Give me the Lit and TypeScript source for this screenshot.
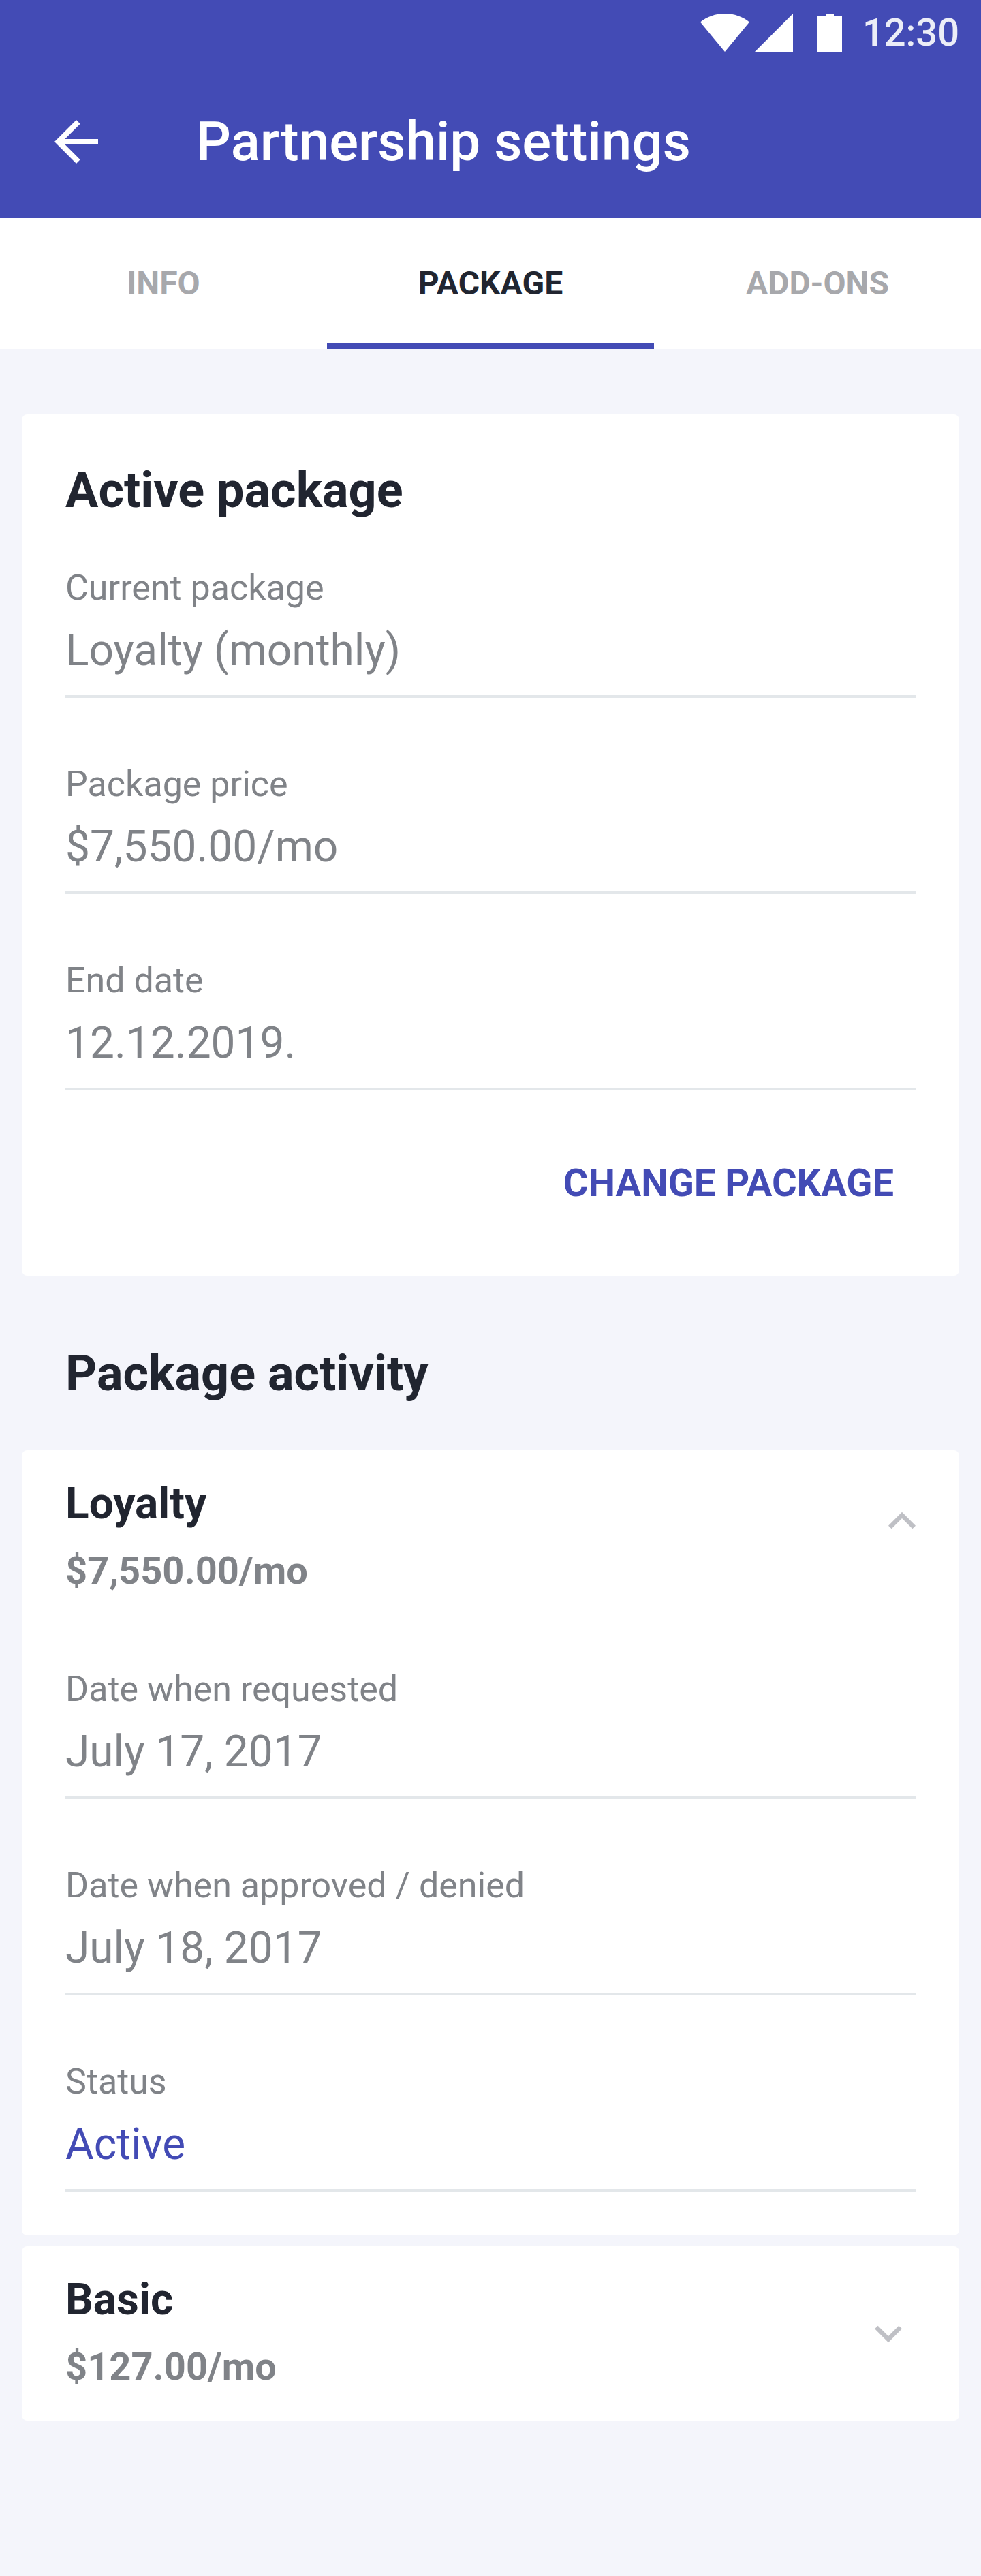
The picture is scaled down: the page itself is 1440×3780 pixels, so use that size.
import { LitElement, html, css, svg, nothing } from "lit";
import { customElement, property, state } from "lit/decorators.js";
import { classMap } from "lit/directives/class-map.js";

interface Field {
  label: string;
  value: string;
  accent?: boolean;
}

interface Activity {
  name: string;
  price: string;
  fields: Field[];
}

const ACTIVE_PACKAGE: Field[] = [
  { label: "Current package", value: "Loyalty (monthly)" },
  { label: "Package price", value: "$7,550.00/mo" },
  { label: "End date", value: "12.12.2019." },
];

const ACTIVITIES: Activity[] = [
  {
    name: "Loyalty",
    price: "$7,550.00/mo",
    fields: [
      { label: "Date when requested", value: "July 17, 2017" },
      { label: "Date when approved / denied", value: "July 18, 2017" },
      { label: "Status", value: "Active", accent: true },
    ],
  },
  {
    name: "Basic",
    price: "$127.00/mo",
    fields: [],
  },
];

const TABS = ["INFO", "PACKAGE", "ADD-ONS"];

const chevronUp = svg`<path d="M12 8l-6 6 1.41 1.41L12 10.83l4.59 4.58L18 14z" />`;
const chevronDown = svg`<path d="M16.59 8.59L12 13.17 7.41 8.59 6 10l6 6 6-6z" />`;

@customElement("status-bar")
class StatusBar extends LitElement {
  static styles = css`
    :host {
      display: flex;
      align-items: center;
      justify-content: flex-end;
      height: 96px;
      padding-right: 32px;
      box-sizing: border-box;
      color: #fff;
    }
    .icon {
      display: block;
      height: 56px;
      fill: currentColor;
    }
    .wifi {
      width: 72px;
      margin-right: 8px;
    }
    .cell {
      width: 56px;
      margin-right: 36px;
    }
    .battery {
      width: 36px;
      margin-right: 30px;
    }
    .time {
      font-size: 56px;
      line-height: 66px;
      font-weight: 500;
      opacity: 0.9;
    }
  `;

  render() {
    return html`
      <svg class="icon wifi" viewBox="0 0 72 56" aria-hidden="true">
        <path d="M36 56L0 12.4C10 4.4 22.4 0 36 0s26 4.4 36 12.4z" />
      </svg>
      <svg class="icon cell" viewBox="0 0 56 56" aria-hidden="true">
        <path d="M0 56h56V0z" />
      </svg>
      <svg class="icon battery" viewBox="0 0 36 56" aria-hidden="true">
        <path d="M12 0h12v3.4h12V56H0V3.4h12z" />
      </svg>
      <span class="time">12:30</span>
    `;
  }
}

@customElement("field-list")
class FieldList extends LitElement {
  @property({ attribute: false }) fields: Field[] = [];

  static styles = css`
    :host {
      display: block;
    }
    .list {
      display: flex;
      flex-direction: column;
      gap: 96px;
      margin: 0;
    }
    .field {
      display: flex;
      flex-direction: column;
      gap: 22px;
      padding-bottom: 26px;
      border-bottom: 4px solid #e3e7ea;
    }
    .label {
      font-size: 52px;
      line-height: 62px;
    }
    .value {
      margin: 0;
      font-size: 64px;
      line-height: 78px;
    }
    .accent {
      color: #434bb5;
    }
  `;

  render() {
    return html`
      <dl class="list">
        ${this.fields.map(
          (f) => html`
            <div class="field">
              <dt class="label">${f.label}</dt>
              <dd class=${classMap({ value: true, accent: !!f.accent })}>${f.value}</dd>
            </div>
          `
        )}
      </dl>
    `;
  }
}

@customElement("activity-card")
class ActivityCard extends LitElement {
  @property({ attribute: false }) activity!: Activity;
  @property({ type: Boolean }) open = false;

  static styles = css`
    :host {
      display: block;
      border-radius: 8px;
      background: #fff;
    }
    .heading {
      margin: 0;
      font: inherit;
    }
    .toggle {
      display: flex;
      align-items: center;
      justify-content: space-between;
      width: 100%;
      padding: 40px 64px 46px;
      border: 0;
      background: none;
      color: inherit;
      font: inherit;
      text-align: left;
      cursor: pointer;
    }
    .titles {
      display: flex;
      flex-direction: column;
      gap: 26px;
    }
    .name {
      font-size: 64px;
      line-height: 78px;
      font-weight: 700;
      color: #212530;
    }
    .price {
      font-size: 56px;
      line-height: 66px;
      font-weight: 700;
      color: #808388;
    }
    .chevron {
      display: block;
      width: 80px;
      height: 80px;
      margin-top: 6px;
      fill: #bfc0c5;
    }
    .open .chevron {
      margin: 0 -20px 42px 0;
    }
    .details {
      padding: 64px;
    }
  `;

  private flip() {
    this.open = !this.open;
  }

  render() {
    const { name, price, fields } = this.activity;
    return html`
      <section class=${classMap({ open: this.open })}>
        <h3 class="heading">
          <button class="toggle" type="button" aria-expanded=${this.open} @click=${this.flip}>
            <span class="titles">
              <span class="name">${name}</span>
              <span class="price">${price}</span>
            </span>
            <svg class="chevron" viewBox="0 0 24 24" aria-hidden="true">
              ${this.open ? chevronUp : chevronDown}
            </svg>
          </button>
        </h3>
        ${this.open && fields.length
          ? html`<field-list class="details" .fields=${fields}></field-list>`
          : nothing}
      </section>
    `;
  }
}

@customElement("app-root")
class AppRoot extends LitElement {
  @state() private tab = "PACKAGE";

  static styles = css`
    :host {
      display: block;
      min-height: 100vh;
      background: #f4f5fb;
      color: #808388;
      font-family: Roboto, "Liberation Sans", sans-serif;
    }
    .top {
      background: #434bb5;
      color: #fff;
    }
    .bar {
      display: flex;
      align-items: center;
      gap: 128px;
      height: 224px;
      padding: 0 64px;
    }
    .back {
      display: block;
      padding: 0;
      border: 0;
      background: none;
      color: inherit;
      cursor: pointer;
    }
    .arrow {
      display: block;
      width: 96px;
      height: 96px;
      fill: currentColor;
    }
    .screen-title {
      margin: 0;
      font-size: 80px;
      line-height: 96px;
      font-weight: 500;
    }
    .tabs {
      display: grid;
      grid-template-columns: repeat(3, 1fr);
      background: #fff;
    }
    .tab {
      height: 192px;
      padding: 0;
      border: 0;
      background: none;
      color: #a7a8ac;
      font: inherit;
      font-size: 48px;
      line-height: 56px;
      font-weight: 700;
      cursor: pointer;
    }
    .tab.selected {
      color: #212530;
      box-shadow: inset 0 -8px #434bb5;
    }
    .content {
      padding: 96px 32px;
    }
    .card {
      padding: 72px 64px 64px;
      border-radius: 8px;
      background: #fff;
    }
    .title {
      margin: 0;
      font-size: 72px;
      line-height: 80px;
      font-weight: 700;
      color: #212530;
    }
    .card .title {
      margin-bottom: 72px;
    }
    .actions {
      display: flex;
      justify-content: flex-end;
      margin-top: 64px;
    }
    .change {
      height: 144px;
      padding: 0 32px;
      border: 0;
      background: none;
      color: #434bb5;
      font: inherit;
      font-size: 56px;
      line-height: 66px;
      font-weight: 700;
      cursor: pointer;
    }
    .activity-title {
      padding: 104px 64px 72px;
    }
    .activities {
      display: flex;
      flex-direction: column;
      gap: 16px;
    }
  `;

  render() {
    return html`
      <header class="top">
        <status-bar></status-bar>
        <div class="bar">
          <button class="back" type="button" aria-label="Back">
            <svg class="arrow" viewBox="0 0 24 24" aria-hidden="true">
              <path d="M20 11H7.83l5.59-5.59L12 4l-8 8 8 8 1.41-1.41L7.83 13H20z" />
            </svg>
          </button>
          <h1 class="screen-title">Partnership settings</h1>
        </div>
      </header>
      <nav class="tabs" role="tablist">
        ${TABS.map(
          (t) => html`
            <button
              class=${classMap({ tab: true, selected: t === this.tab })}
              type="button"
              role="tab"
              aria-selected=${t === this.tab}
              @click=${() => (this.tab = t)}
            >
              ${t}
            </button>
          `
        )}
      </nav>
      <main class="content">
        <section class="card">
          <h2 class="title">Active package</h2>
          <field-list .fields=${ACTIVE_PACKAGE}></field-list>
          <div class="actions">
            <button class="change" type="button">CHANGE PACKAGE</button>
          </div>
        </section>
        <h2 class="title activity-title">Package activity</h2>
        <div class="activities">
          ${ACTIVITIES.map(
            (a, i) => html`<activity-card .activity=${a} ?open=${i === 0}></activity-card>`
          )}
        </div>
      </main>
    `;
  }
}
